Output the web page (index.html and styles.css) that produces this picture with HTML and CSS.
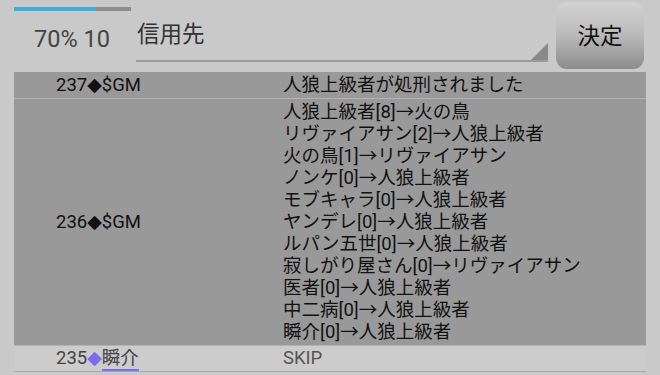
FILE: index.html
```html
<!DOCTYPE html>
<html>
  <head>
    <title>Vote Log</title>
    <link rel="stylesheet" href="styles.css">
  </head>
  <body>
    <header class="top">
      <div class="status">
        <div class="progress"><div class="progress-fill"></div></div>
        <div class="status-text">70% 10</div>
      </div>
      <div class="target-select">
        <span class="target-label">信用先</span>
      </div>
      <button class="decide-btn">決定</button>
    </header>

    <!-- Vote log -->
    <div class="log">
      <div class="log-row dark">
        <div class="log-who">237<span class="dia">◆</span>$GM</div>
        <div class="log-what">人狼上級者が処刑されました</div>
      </div>
      <div class="log-row dark">
        <div class="log-who">236<span class="dia">◆</span>$GM</div>
        <div class="log-what">
          人狼上級者[8]→火の鳥<br>
          リヴァイアサン[2]→人狼上級者<br>
          火の鳥[1]→リヴァイアサン<br>
          ノンケ[0]→人狼上級者<br>
          モブキャラ[0]→人狼上級者<br>
          ヤンデレ[0]→人狼上級者<br>
          ルパン五世[0]→人狼上級者<br>
          寂しがり屋さん[0]→リヴァイアサン<br>
          医者[0]→人狼上級者<br>
          中二病[0]→人狼上級者<br>
          瞬介[0]→人狼上級者
        </div>
      </div>
      <div class="log-row light">
        <div class="log-who">235<span class="dia mark">◆</span><span class="player">瞬介</span></div>
        <div class="log-what skip">SKIP</div>
      </div>
    </div>
  </body>
</html>
```

FILE: styles.css
```css
body {
  margin: 0;
  background-color: #c9c9c9;
  font-family: Roboto, "Noto Sans CJK JP", sans-serif;
  color: #111;
  overflow: hidden;
}
.top {
  display: flex;
  height: 72px;
}
.status {
  width: 136px;
  padding-top: 7px;
}
.progress {
  margin-left: 14px;
  width: 117px;
  height: 4px;
  background-color: #8e8e8e;
}
.progress-fill {
  width: 70%;
  height: 100%;
  background-color: #3fb0dc;
}
.status-text {
  margin: 13px 0 0 34px;
  font-size: 23.5px;
  line-height: 30px;
  color: #444;
}
.target-select {
  position: relative;
  width: 412px;
  height: 59px;
  margin-top: 1px;
  border-bottom: 2px solid #9a9a9a;
}
.target-select::after {
  content: "";
  position: absolute;
  right: 0;
  bottom: 0;
  border-style: solid;
  border-width: 0 0 17px 17px;
  border-color: transparent transparent #8a8a8a transparent;
}
.target-label {
  display: block;
  margin: 18px 0 0 1px;
  font-size: 22.5px;
  line-height: 30px;
  color: #333;
}
.decide-btn {
  margin: 2px 0 0 8px;
  width: 88px;
  height: 67px;
  border: none;
  border-radius: 11px;
  background: linear-gradient(#d2d2d2, #bdbdbd 45%, #8c8c8c);
  font-family: "Noto Sans CJK JP", sans-serif;
  font-size: 22.5px;
  color: #111;
  padding: 0 0 3px;
}
.log {
  margin-left: 14px;
  width: 632px;
}
.log-row {
  display: flex;
  align-items: center;
  font-size: 18.5px;
  line-height: 22px;
}
.log-row.dark {
  background-color: #999999;
  border-bottom: 1px solid #b3b3b3;
  padding: 2px 0;
}
.log-row.light {
  background-color: #cccccc;
  border-bottom: 1px solid #a8a8a8;
  padding: 1px 0 2px;
  color: #444;
}
.log-who {
  width: 227px;
  padding-left: 42px;
}
.log-what {
  flex: 1;
}
.dia {
  font-family: "DejaVu Sans", sans-serif;
  font-size: 19px;
  line-height: 20px;
}
.skip {
  color: #555;
}
.mark {
  color: #7b6cf0;
}
.player {
  border-bottom: 2px solid #7b6cf0;
}
```
